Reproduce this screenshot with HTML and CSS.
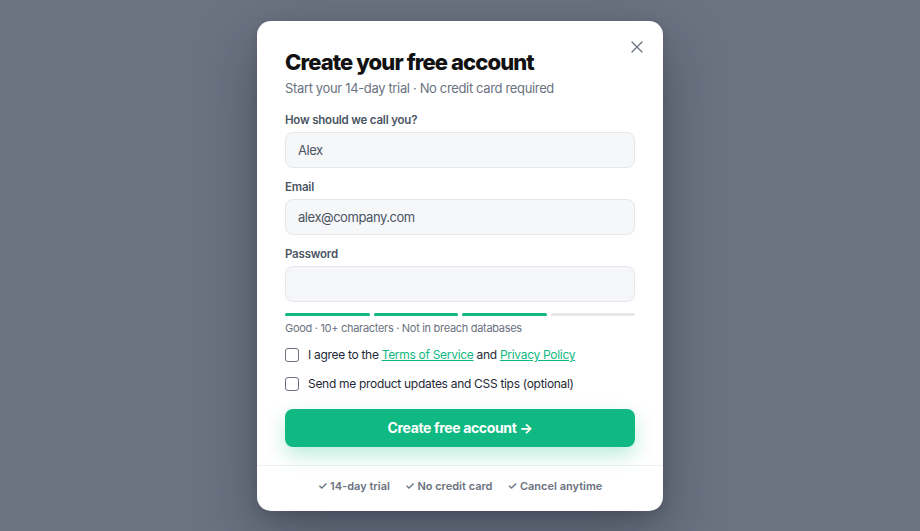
FILE: index.html
```html
<!DOCTYPE html>
<html lang="en">
<head>
<meta charset="utf-8">
<title>Create your free account</title>
<link rel="stylesheet" href="styles.css">
</head>
<body>
<div class="overlay">
  <div class="modal">
    <button class="close" aria-label="Close">
      <svg width="12" height="12" viewBox="0 0 12 12"><path d="M1 1L11 11M11 1L1 11" stroke="#6b7280" stroke-width="1.3" stroke-linecap="round" fill="none"/></svg>
    </button>
    <div class="body">
      <h1 class="title">Create your free account</h1>
      <p class="subtitle">Start your 14-day trial · No credit card required</p>

      <div class="field">
        <label class="label">How should we call you?</label>
        <input class="input" type="text" value="Alex">
      </div>
      <div class="field">
        <label class="label">Email</label>
        <input class="input" type="email" value="alex@company.com">
      </div>
      <div class="field">
        <label class="label">Password</label>
        <input class="input" type="password" value="">
      </div>

      <div class="strength">
        <span class="seg on"></span>
        <span class="seg on"></span>
        <span class="seg on"></span>
        <span class="seg"></span>
      </div>
      <p class="hint">Good · 10+ characters · Not in breach databases</p>

      <label class="check">
        <input type="checkbox" class="box">
        <span>I agree to the <a href="#">Terms of Service</a> and <a href="#">Privacy Policy</a></span>
      </label>
      <label class="check">
        <input type="checkbox" class="box">
        <span>Send me product updates and CSS tips (optional)</span>
      </label>

      <button class="submit">Create free account →</button>
    </div>
    <div class="footer">
      <span>✓ 14-day trial</span>
      <span>✓ No credit card</span>
      <span>✓ Cancel anytime</span>
    </div>
  </div>
</div>
</body>
</html>
```

FILE: styles.css
```css
* { box-sizing: border-box; }
html, body { margin: 0; height: 100%; }
body {
  font-family: Inter, "Noto Sans", "Liberation Sans", sans-serif;
  background: #6b7280;
  color: #111827;
}
.overlay {
  height: 100%;
  display: flex;
  align-items: center;
  justify-content: center;
}
.modal {
  position: relative;
  width: 406px;
  background: #fff;
  border-radius: 14px;
  box-shadow: 0 24px 60px rgba(17, 24, 39, 0.35), 0 4px 12px rgba(17, 24, 39, 0.15);
}
.close {
  position: absolute;
  top: 14px;
  right: 14px;
  width: 24px;
  height: 24px;
  padding: 0;
  border: 0;
  background: none;
  display: flex;
  align-items: center;
  justify-content: center;
}
.body {
  padding: 27px 28px 18px;
  display: flex;
  flex-direction: column;
}
.title {
  margin: 0;
  font-size: 22px;
  line-height: 28px;
  font-weight: 800;
  letter-spacing: -0.9px;
  color: #111111;
}
.subtitle {
  margin: 3px 0 15px;
  font-size: 13px;
  line-height: 18px;
  letter-spacing: -0.35px;
  color: #6b7280;
}
.field {
  display: flex;
  flex-direction: column;
  gap: 4px;
  margin-bottom: 11px;
}
.label {
  font-size: 11.5px;
  line-height: 16px;
  font-weight: 600;
  letter-spacing: -0.2px;
  color: #4b5563;
}
.input {
  height: 36px;
  width: 100%;
  padding: 0 12px;
  border: 1px solid #e5e7eb;
  border-radius: 8px;
  background: #f6f7f9;
  font: inherit;
  font-size: 13px;
  letter-spacing: -0.45px;
  color: #4b5563;
  outline: none;
}
.strength {
  display: flex;
  gap: 4px;
}
.seg {
  flex: 1;
  height: 3px;
  border-radius: 2px;
  background: #e5e7eb;
}
.seg.on { background: #10b981; }
.hint {
  margin: 5px 0 10px;
  font-size: 11px;
  line-height: 14px;
  letter-spacing: -0.3px;
  color: #6b7280;
}
.check {
  display: flex;
  align-items: center;
  gap: 9px;
  height: 20px;
  font-size: 12px;
  letter-spacing: -0.3px;
  color: #1f2937;
  margin-bottom: 9px;
}
.check a { color: #10b981; text-decoration: underline; }
.box {
  appearance: none;
  -webkit-appearance: none;
  margin: 0;
  width: 14px;
  height: 14px;
  border: 1.5px solid #6b7280;
  border-radius: 3px;
  background: #fff;
  flex: none;
}
.submit {
  margin-top: 6px;
  height: 38px;
  border: 0;
  border-radius: 8px;
  background: #10b981;
  color: #fff;
  font: inherit;
  font-size: 14px;
  font-weight: 700;
  letter-spacing: -0.35px;
  box-shadow: 0 8px 20px rgba(16, 185, 129, 0.28);
}
.footer {
  border-top: 1px solid #eef0f2;
  padding: 12px 0 17px;
  display: flex;
  justify-content: center;
  gap: 15px;
  font-size: 11px;
  line-height: 16px;
  font-weight: 600;
  color: #6b7280;
}
```
